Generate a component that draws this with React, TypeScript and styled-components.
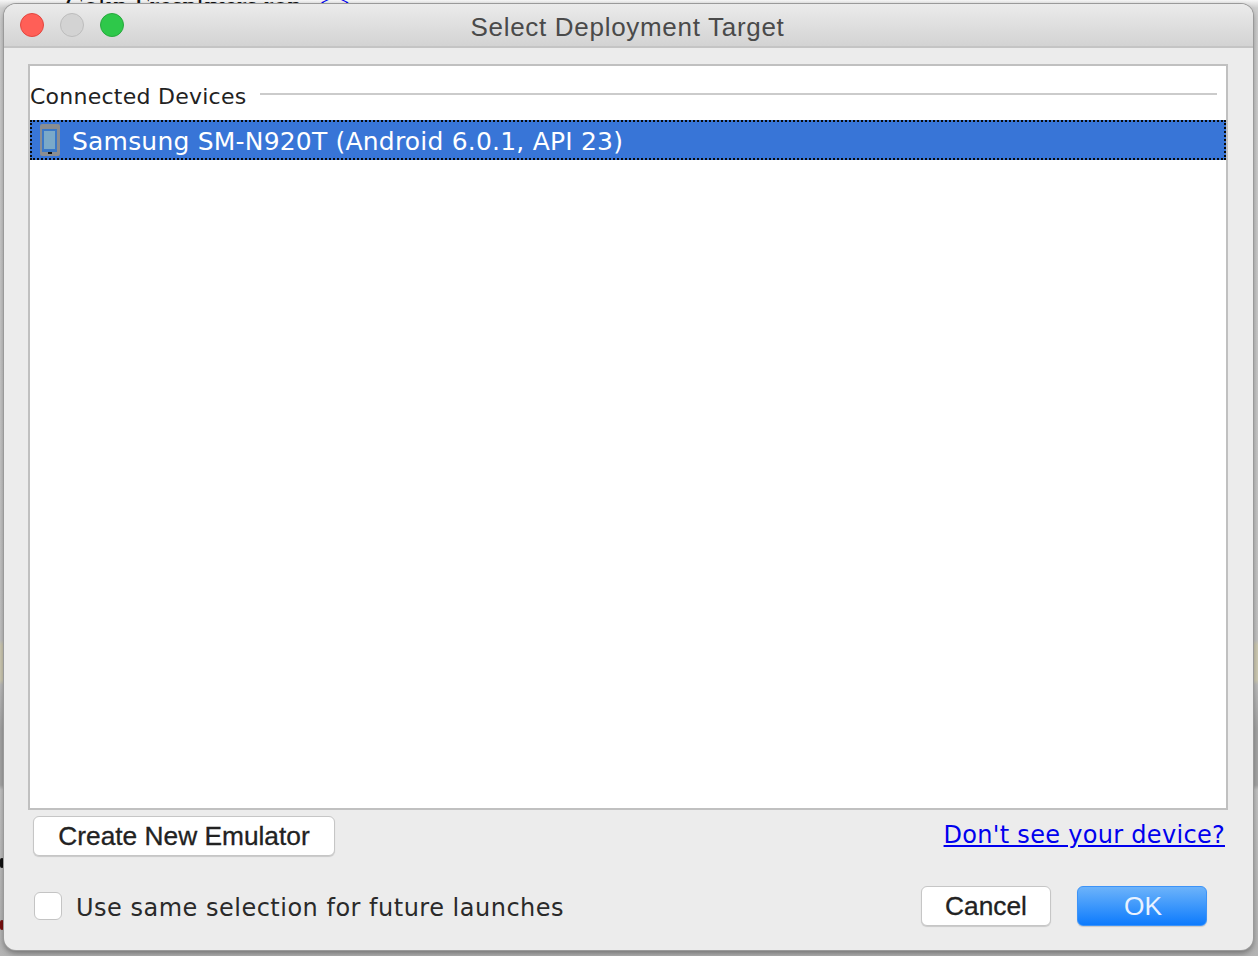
import styled, { createGlobalStyle } from "styled-components";

const GlobalStyle = createGlobalStyle`
  html, body {
    margin: 0;
    padding: 0;
    background: #fff;
  }
`;

export default function App() {
  return (
    <>
      <GlobalStyle />
      <Desktop>
        <BehindText>Colin Fresnkvers ron</BehindText>
        <BehindLink>&lt;&gt;</BehindLink>
        <BehindDot $top={858} $color="#111" />
        <BehindDot $top={920} $color="#7a0f0f" />
        <Window>
          <TitleBar>
            <Light $fill="#ff5f57" $edge="#e2463f" />
            <Light $fill="#d3d3d3" $edge="#bcbcbc" />
            <Light $fill="#2ec84a" $edge="#27a83d" />
            <Title>Select Deployment Target</Title>
          </TitleBar>
          <Body>
            <DeviceList>
              <GroupHeader>
                <GroupName>Connected Devices</GroupName>
                <GroupRule />
              </GroupHeader>
              <DeviceRow>
                <PhoneIcon />
                <DeviceName>Samsung SM-N920T (Android 6.0.1, API 23)</DeviceName>
              </DeviceRow>
            </DeviceList>
            <ActionRow>
              <PushButton $width={302}>Create New Emulator</PushButton>
              <HelpLink href="#">Don't see your device?</HelpLink>
            </ActionRow>
            <FooterRow>
              <CheckLabel>
                <CheckBox />
                <span>Use same selection for future launches</span>
              </CheckLabel>
              <FooterButtons>
                <PushButton $width={130}>Cancel</PushButton>
                <PushButton $width={130} $primary>
                  OK
                </PushButton>
              </FooterButtons>
            </FooterRow>
          </Body>
        </Window>
      </Desktop>
    </>
  );
}

function PhoneIcon() {
  return (
    <svg width="22" height="32" viewBox="0 0 22 32" style={{ flex: "none" }}>
      <rect x="1" y="0" width="20" height="32" rx="2" fill="#8a8d92" />
      <rect x="3" y="5" width="15" height="23" fill="#3a78c8" />
      <rect x="5" y="7" width="11" height="18" fill="#7aa9c9" />
      <rect x="9" y="28" width="4" height="2" fill="#111" />
    </svg>
  );
}

const Desktop = styled.div`
  position: relative;
  width: 1258px;
  height: 956px;
  overflow: hidden;
  box-sizing: border-box;
  padding: 4px 5px 6px 4px;
  background: linear-gradient(
    #f6f6f6 0,
    #cfcfcf 8px,
    #c4c4c4 640px,
    #cfcbb4 645px,
    #cfcbb4 680px,
    #bdbdbd 685px,
    #a6a6a6 730px,
    #a6a6a6 785px,
    #c4c4c4 790px,
    #b4b4b4 100%
  );
`;

const BehindText = styled.div`
  position: absolute;
  left: 65px;
  top: -10px;
  font: 28px "Liberation Serif", serif;
  color: #111;
`;

const BehindLink = styled.div`
  position: absolute;
  left: 320px;
  top: -12px;
  font: 26px "Liberation Serif", serif;
  color: #0000ee;
`;

const BehindDot = styled.span<{ $top: number; $color: string }>`
  position: absolute;
  left: 0;
  top: ${(p) => p.$top}px;
  width: 4px;
  height: 10px;
  border-radius: 2px;
  background: ${(p) => p.$color};
`;

const Window = styled.div`
  position: relative;
  height: 100%;
  display: flex;
  flex-direction: column;
  background: #ececec;
  border-radius: 12px;
  overflow: hidden;
  box-shadow: 0 0 0 1px #9a9a9a, 0 3px 6px rgba(0, 0, 0, 0.4);
`;

const TitleBar = styled.div`
  position: relative;
  height: 44px;
  flex: none;
  display: flex;
  align-items: center;
  gap: 16px;
  padding: 0 0 0 16px;
  box-sizing: border-box;
  background: linear-gradient(#ebebeb, #d3d3d3);
  border-bottom: 2px solid #c4c4c4;
`;

const Light = styled.span<{ $fill: string; $edge: string }>`
  width: 24px;
  height: 24px;
  box-sizing: border-box;
  border-radius: 50%;
  background: ${(p) => p.$fill};
  border: 1px solid ${(p) => p.$edge};
`;

const Title = styled.div`
  position: absolute;
  left: -2px;
  right: 0;
  top: 7px;
  text-align: center;
  font: 26px/32px "Liberation Sans", sans-serif;
  letter-spacing: 0.7px;
  color: #4a4a4a;
`;

const Body = styled.div`
  flex: 1;
  display: flex;
  flex-direction: column;
  padding: 16px 25px 0 24px;
  min-height: 0;
`;

const DeviceList = styled.div`
  height: 746px;
  flex: none;
  box-sizing: border-box;
  background: #fff;
  border: 2px solid #c0c0c0;
  padding-top: 14px;
`;

const GroupHeader = styled.div`
  height: 30px;
  display: flex;
  align-items: center;
  gap: 14px;
  padding-right: 9px;
  margin-bottom: 10px;
`;

const GroupName = styled.span`
  font: 22px/30px "DejaVu Sans", sans-serif;
  letter-spacing: 0.25px;
  color: #222;
  white-space: nowrap;
  padding-top: 4px;
`;

const GroupRule = styled.span`
  flex: 1;
  height: 2px;
  margin-top: -2px;
  background: #cbcbcb;
`;

const DeviceRow = styled.div`
  height: 40px;
  display: flex;
  align-items: center;
  gap: 11px;
  box-sizing: border-box;
  padding-left: 9px;
  background: #3875d7;
  outline: 2px dotted #0a0a0a;
  outline-offset: -2px;
`;

const DeviceName = styled.span`
  font: 25px/32px "DejaVu Sans", sans-serif;
  letter-spacing: 0.2px;
  color: #fff;
  white-space: nowrap;
  padding-top: 3px;
`;

const ActionRow = styled.div`
  display: flex;
  justify-content: space-between;
  align-items: flex-start;
  padding: 6px 3px 0 5px;
`;

const FooterRow = styled.div`
  display: flex;
  justify-content: space-between;
  align-items: center;
  padding: 30px 21px 0 6px;
`;

const PushButton = styled.button<{ $width: number; $primary?: boolean }>`
  width: ${(p) => p.$width}px;
  height: 40px;
  padding: ${(p) => (p.$primary ? "0 0 0 2px" : "0")};
  box-sizing: border-box;
  border-radius: 6px;
  font: 26.3px/1 "Liberation Sans", sans-serif;
  -webkit-text-stroke: ${(p) => (p.$primary ? "0" : "0.3px currentColor")};
  color: ${(p) => (p.$primary ? "#e9f2ff" : "#222")};
  background: ${(p) => (p.$primary ? "linear-gradient(#6cb3fa, #0d7bfd)" : "#fff")};
  border: 1px solid ${(p) => (p.$primary ? "#3c93f8" : "#c6c6c6")};
  box-shadow: 0 1px 1px rgba(0, 0, 0, 0.15);
`;

const HelpLink = styled.a`
  font: 24px/34px "DejaVu Sans", sans-serif;
  letter-spacing: 0.3px;
  color: #0000ee;
  text-decoration: underline;
  white-space: nowrap;
  padding-top: 2px;
`;

const CheckLabel = styled.label`
  display: flex;
  align-items: center;
  gap: 14px;
  font: 24px/32px "DejaVu Sans", sans-serif;
  letter-spacing: 0.5px;
  color: #2a2a2a;

  span:last-child {
    padding-top: 3px;
  }
`;

const CheckBox = styled.span`
  width: 28px;
  height: 28px;
  box-sizing: border-box;
  background: #fff;
  border: 1px solid #c4c4c4;
  border-radius: 6px;
`;

const FooterButtons = styled.div`
  display: flex;
  gap: 26px;
`;
